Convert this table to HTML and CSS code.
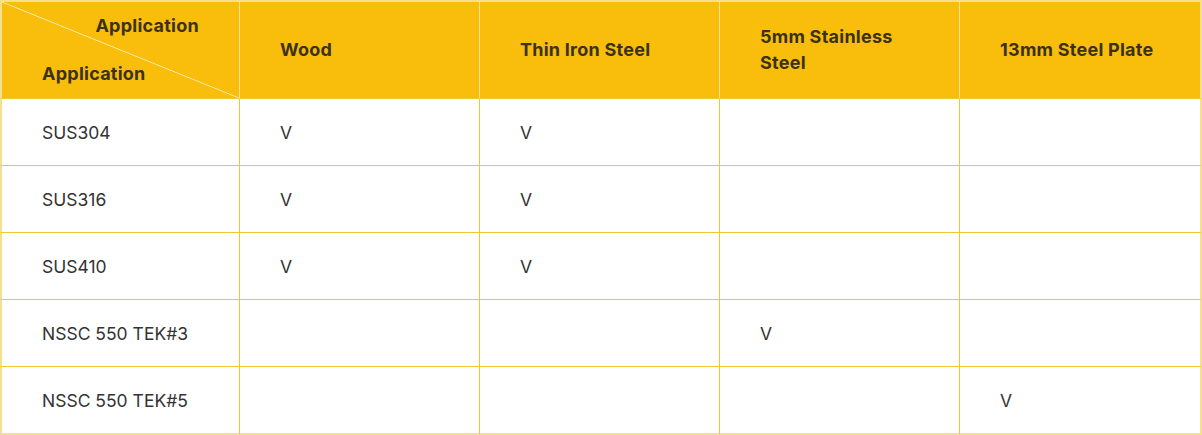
FILE: index.html
```html
<!DOCTYPE html>
<html>
<head>
<meta charset="utf-8">
<link rel="stylesheet" href="styles.css">
</head>
<body>
<table class="spec">
  <colgroup>
    <col class="c">
    <col class="c">
    <col class="c">
    <col class="c">
    <col class="c-last">
  </colgroup>
  <thead>
    <tr>
      <th class="corner">
        <div class="corner-top">Application</div>
        <div class="corner-bottom">Application</div>
      </th>
      <th>Wood</th>
      <th>Thin Iron Steel</th>
      <th>5mm Stainless<br>Steel</th>
      <th>13mm Steel Plate</th>
    </tr>
  </thead>
  <tbody>
    <tr><td>SUS304</td><td>V</td><td>V</td><td></td><td></td></tr>
    <tr><td>SUS316</td><td>V</td><td>V</td><td></td><td></td></tr>
    <tr><td>SUS410</td><td>V</td><td>V</td><td></td><td></td></tr>
    <tr><td>NSSC 550 TEK#3</td><td></td><td></td><td>V</td><td></td></tr>
    <tr><td>NSSC 550 TEK#5</td><td></td><td></td><td></td><td>V</td></tr>
  </tbody>
</table>
</body>
</html>
```

FILE: styles.css
```css
html, body {
  margin: 0;
  padding: 0;
  background: #ffffff;
}

.spec {
  width: 1202px;
  border-collapse: separate;
  border-spacing: 0;
  table-layout: fixed;
  font-family: Inter, "Liberation Sans", sans-serif;
  font-size: 17.5px;
  color: #333333;
}

.spec col.c {
  width: 240px;
}

.spec th,
.spec td {
  box-sizing: border-box;
  padding: 0 40px;
  vertical-align: middle;
  border-right: 1px solid #f0c72e;
  border-bottom: 1px solid #f0c72e;
}

.spec th {
  background: #f9bd0b;
  color: #3b3216;
  font-weight: 700;
  font-size: 18px;
  letter-spacing: 0.25px;
  text-align: left;
  height: 99px;
  line-height: 26px;
  border-right-color: #fde49a;
  border-top: 2px solid #f6e08e;
}

.spec td {
  height: 67px;
  color: #333333;
}

.spec td:first-child,
.spec th:first-child {
  border-left: 2px solid #f6e08e;
  padding-left: 40px;
}

.spec td:last-child,
.spec th:last-child {
  border-right: 2px solid #f6e08e;
}

.spec tr:last-child td {
  border-bottom: 2px solid #f6e08e;
  height: 68px;
}

.spec th.corner {
  padding: 0;
  background:
    linear-gradient(to top right, transparent calc(50% - 0.8px), #fbeec0 50%, transparent calc(50% + 0.8px)),
    #f9bd0b;
}

.corner-top {
  text-align: right;
  padding: 0 40px 0 0;
  margin-bottom: 22px;
}

.corner-bottom {
  text-align: left;
  padding: 0 0 0 40px;
}
```
